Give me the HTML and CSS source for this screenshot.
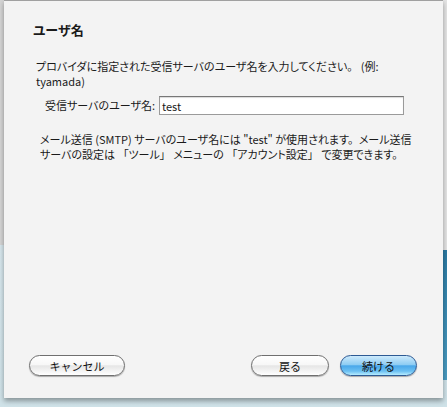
FILE: index.html
```html
<!DOCTYPE html>
<html lang="ja">
<head>
<meta charset="utf-8">
<link rel="stylesheet" href="styles.css">
</head>
<body>
<div class="sheet">
  <div class="content">
    <h1 class="title">ユーザ名</h1>
    <p class="intro">プロバイダに指定された受信サーバのユーザ名を入力してください。&ensp; (例: tyamada)</p>
    <div class="field">
      <label class="label">受信サーバのユーザ名:</label>
      <div class="input">test</div>
    </div>
    <p class="note">メール送信 (SMTP) サーバのユーザ名には "test" が使用されます。&ensp;メール送信サーバの設定は &ensp;「ツール」&ensp; メニューの &ensp;「アカウント設定」&ensp; で変更できます。</p>
  </div>
  <div class="footer">
    <button class="btn btn-cancel">キャンセル</button>
    <div class="right">
      <button class="btn btn-back">戻る</button>
      <button class="btn btn-default">続ける</button>
    </div>
  </div>
</div>
</body>
</html>
```

FILE: styles.css
```css
html, body {
  margin: 0;
  padding: 0;
}
body {
  width: 447px;
  height: 407px;
  overflow: hidden;
  font-family: "Noto Sans CJK JP", "Noto Sans", sans-serif;
  color: #1a1a1a;
  background:
    linear-gradient(#2b7aa3, #4a9cc2) right 250px / 4px 130px no-repeat,
    linear-gradient(#e4e4e4, #e4e4e4) right 0 / 4px 250px no-repeat,
    linear-gradient(to bottom, #d4d4d4 0, #d4d4d4 245px, #d6e6ec 245px, #cfe2e8 100%);
}
.sheet {
  margin-left: 4px;
  width: 439px;
  height: 398px;
  box-sizing: border-box;
  background: #f3f3f3;
  border-top: 1px solid #a0a0a0;
  box-shadow: 0 3px 5px rgba(0, 0, 0, 0.35);
  display: flex;
  flex-direction: column;
}
.content {
  padding: 20px 10px 0 29px;
  font-size: 11px;
  line-height: 15px;
  font-feature-settings: "palt";
}
.title {
  margin: 0;
  font-size: 13px;
  line-height: 17px;
  font-weight: bold;
}
.intro {
  margin: 21px 0 0 3px;
  width: 372px;
}
.field {
  display: flex;
  align-items: center;
  margin: 7px 0 0 12px;
}
.label {
  width: 114px;
}
.input {
  width: 239px;
  height: 16px;
  border: 1px solid #9a9a9a;
  border-top-color: #777;
  background: #fff;
  padding: 1px 2px 0 2px;
  font-size: 11px;
  line-height: 16px;
  box-shadow: inset 0 1px 1px rgba(0,0,0,0.15);
}
.note {
  margin: 17px 0 0 7px;
  width: 376px;
}
.footer {
  margin-top: auto;
  padding: 0 26px 22px 25px;
  display: flex;
  justify-content: space-between;
  align-items: center;
}
.right {
  display: flex;
  gap: 11px;
}
.btn {
  height: 21px;
  border-radius: 11px;
  border: 1px solid #6f6f6f;
  font-family: "Noto Sans CJK JP", sans-serif;
  font-size: 11px;
  line-height: 18px;
  padding: 0;
  color: #111;
  background: linear-gradient(to bottom, #ffffff 0%, #f7f7f7 45%, #e6e6e6 52%, #f4f4f4 80%, #ffffff 100%);
  box-shadow: 0 1px 1px rgba(0, 0, 0, 0.3);
}
.btn-cancel { width: 96px; }
.btn-back { width: 78px; }
.btn-default {
  width: 77px;
  border-color: #2d5a94;
  background: linear-gradient(to bottom, #cdeafc 0%, #8fcdf3 45%, #4aa8ea 52%, #6cc0f2 80%, #b6ecff 100%);
}
```
